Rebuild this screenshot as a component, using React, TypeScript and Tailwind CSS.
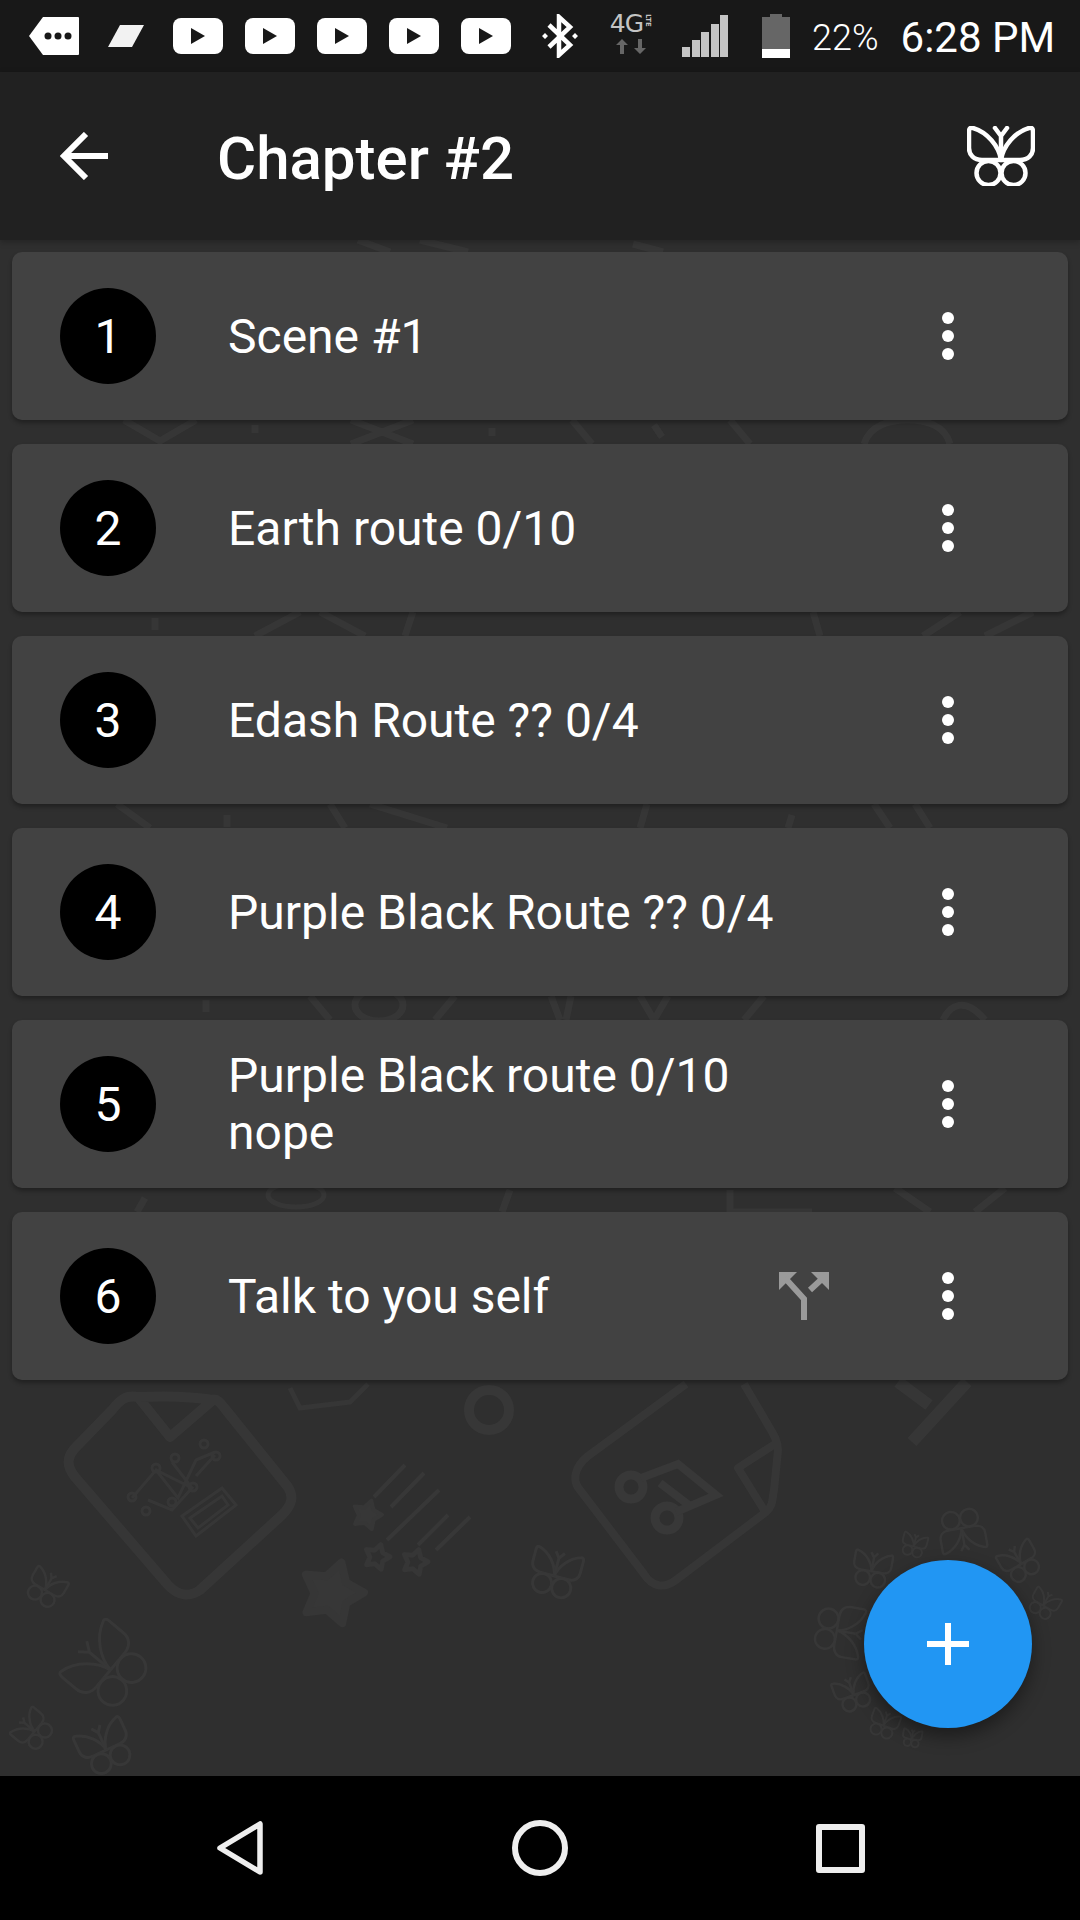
import React from "react";

const ROBOTO = "font-['Roboto',sans-serif]";

function Butterfly({ x, y, s, r = 0, w = 3 }: { x: number; y: number; s: number; r?: number; w?: number }) {
  const k = s / 68;
  return (
    <g transform={`translate(${x} ${y}) rotate(${r}) scale(${k}) translate(-34 -30)`} fill="none" stroke="#3b3b3b" strokeWidth={w / k}>
      <path d="M34 34C32 20 20 6 6 2 3 1 2 3 2 6V22C2 29 7 34 15 34H53C61 34 66 29 66 22V6C66 3 65 1 62 2 48 6 36 20 34 34Z" />
      <circle cx="21" cy="47" r="12.5" />
      <circle cx="47" cy="47" r="12.5" />
      <path d="M34 34V10M34 10L28 2M34 10L40 2" />
    </g>
  );
}

function Star({ x, y, r, fill, w = 5 }: { x: number; y: number; r: number; fill?: string; w?: number }) {
  const pts: string[] = [];
  for (let i = 0; i < 10; i++) {
    const a = (Math.PI / 5) * i - Math.PI / 2 + 0.3;
    const rr = i % 2 === 0 ? r : r * 0.55;
    pts.push(`${(x + rr * Math.cos(a)).toFixed(1)},${(y + rr * Math.sin(a)).toFixed(1)}`);
  }
  return <polygon points={pts.join(" ")} fill={fill ?? "none"} stroke="#393939" strokeWidth={w} strokeLinejoin="round" />;
}

function Wallpaper() {
  const gapMarks = [
    "M124 420L160 441L196 420", "M255 425v8", "M351 420L413 444M413 420L351 444", "M492 428v8", "M572 420L592 444", "M654 425l8 12", "M730 420L750 444", "M864 444C870 425 890 420 907 420C925 420 945 425 950 444",
    "M358 240L390 252M420 240L468 252M633 244l30 8",
    "M155 618v12", "M255 636L300 612M320 612L365 636", "M413 612L405 636", "M813 612L820 636", "M923 636L960 612M985 636L1033 612",
    "M117 804L150 828", "M227 815v12", "M330 804L345 828M370 804L447 828", "M647 804L640 828", "M792 815L788 828", "M874 804L890 828M915 804L930 828",
    "M206 1000v12", "M310 996L330 1020M455 996L435 1020", "M551 996L560 1020M571 996L566 1020", "M640 996L654 1020L668 996", "M744 1020L764 996", "M943 1020C950 1005 965 996 985 1020",
    "M145 1198l-8 14", "M730 1190v22H812", "M895 1188L930 1212M1005 1188L975 1212", "M510 1190l-8 22",
  ];
  return (
    <svg className="absolute inset-0 opacity-70" width="1080" height="1536" viewBox="0 240 1080 1536" fill="none">
      <g stroke="#3a3a3a">
        {gapMarks.map((d) => (
          <path key={d} d={d} strokeWidth="7" />
        ))}
      </g>
      <ellipse cx="296" cy="1195" rx="28" ry="12" stroke="#3a3a3a" strokeWidth="5" />
      <ellipse cx="379" cy="1005" rx="24" ry="16" stroke="#3a3a3a" strokeWidth="7" />
      <path d="M290 1388L300 1408L350 1402L368 1384" stroke="#393939" strokeWidth="5" />
      <circle cx="489" cy="1410" r="20" stroke="#3b3b3b" strokeWidth="10" />
      <path d="M138 1397L170 1437L213 1400M138 1397C125 1395 120 1400 112 1410L78 1445C66 1456 66 1466 75 1477L168 1585C178 1596 190 1597 200 1590L282 1515C292 1505 294 1497 288 1487L226 1410C220 1402 216 1398 213 1400C190 1396 160 1396 138 1397Z" stroke="#3a3a3a" strokeWidth="10" strokeLinejoin="round" />
      <g stroke="#3a3a3a" strokeWidth="3">
        <path d="M132 1498L156 1470L178 1498L196 1460L215 1452M156 1470L192 1488L172 1510L148 1500M172 1462L192 1488M215 1455L196 1476" />
        <circle cx="156" cy="1468" r="4" /><circle cx="132" cy="1497" r="4" /><circle cx="146" cy="1511" r="4" /><circle cx="172" cy="1502" r="4" /><circle cx="193" cy="1487" r="4" /><circle cx="175" cy="1458" r="4" /><circle cx="204" cy="1444" r="4" /><circle cx="216" cy="1456" r="4" />
        <path d="M182 1516L222 1488L236 1505L196 1536Z" />
        <path d="M190 1518L222 1496L228 1505L198 1528Z" />
      </g>
      <path d="M686 1384L588 1456C574 1467 572 1481 580 1490L644 1574C652 1587 664 1589 676 1580L766 1512C774 1505 772 1498 774 1490L778 1450C778 1440 772 1432 768 1425L744 1384M778 1442L738 1468L764 1510" stroke="#3a3a3a" strokeWidth="8" strokeLinejoin="round" />
      <circle cx="631" cy="1487" r="12" stroke="#3c3c3c" strokeWidth="9" />
      <circle cx="667" cy="1518" r="12" stroke="#3c3c3c" strokeWidth="9" />
      <path d="M641 1478L678 1464L716 1495L676 1512M660 1483L690 1506" stroke="#3c3c3c" strokeWidth="8" />
      <path d="M912 1442L967 1382M898 1382L929 1405" stroke="#3a3a3a" strokeWidth="12" />
      <Star x={332} y={1593} r={32} w={8} fill="#3b3b3b" />
      <Star x={377} y={1557} r={13} w={5} />
      <Star x={415} y={1562} r={13} w={5} />
      <Star x={367} y={1515} r={15} fill="#3b3b3b" w={4} />
      <path d="M374 1497L405 1465M391 1507L424 1473M387 1540L439 1490M418 1545L448 1515M436 1550L470 1517" stroke="#3b3b3b" strokeWidth="4" />
      <Butterfly x={46} y={1588} s={38} r={30} w={2.5} />
      <Butterfly x={107} y={1667} s={78} r={-50} w={3} />
      <Butterfly x={33} y={1730} s={38} r={-50} w={2.5} />
      <Butterfly x={105} y={1747} s={54} r={-25} w={3} />
      <Butterfly x={555} y={1573} s={52} r={15} w={3} />
      <Butterfly x={962} y={1531} s={48} r={170} w={2.5} />
      <Butterfly x={914} y={1545} s={26} r={15} w={2} />
      <Butterfly x={872} y={1569} s={40} r={10} w={2.5} />
      <Butterfly x={1020} y={1562} s={40} r={-30} w={2.5} />
      <Butterfly x={1044} y={1604} s={30} r={30} w={2} />
      <Butterfly x={840} y={1631} s={54} r={100} w={2.5} />
      <Butterfly x={853} y={1693} s={38} r={-20} w={2.5} />
      <Butterfly x={884} y={1724} s={30} r={20} w={2} />
      <Butterfly x={912} y={1738} s={20} r={10} w={2} />
    </svg>
  );
}

function Yt({ className }: { className: string }) {
  return (
    <div className={`flex h-[36px] w-[50px] items-center justify-center rounded-[8px] bg-white ${className}`}>
      <div className="h-0 w-0 border-y-[8px] border-l-[14px] border-y-transparent border-l-[#181818]" />
    </div>
  );
}

function StatusBar() {
  return (
    <div className={`flex h-[72px] shrink-0 items-center bg-[#181818] pl-[29px] text-white ${ROBOTO}`}>
      <svg width="50" height="38" viewBox="0 0 50 38">
        <path d="M14 0H49a1 1 0 0 1 1 1V37a1 1 0 0 1-1 1H14L0 19Z" fill="#fff" />
        <circle cx="19" cy="19" r="3.5" fill="#181818" /><circle cx="29" cy="19" r="3.5" fill="#181818" /><circle cx="39" cy="19" r="3.5" fill="#181818" />
      </svg>
      <svg width="36" height="22" viewBox="0 0 36 22" className="ml-[29px]">
        <path d="M12 0H36L24 22H0Z" fill="#f2f2f2" />
      </svg>
      <Yt className="ml-[29px]" />
      <Yt className="ml-[22px]" />
      <Yt className="ml-[22px]" />
      <Yt className="ml-[22px]" />
      <Yt className="ml-[22px]" />
      <svg width="38" height="44" viewBox="0 0 38 44" className="ml-[30px]" fill="none">
        <path d="M8 11L29 31L18 41V3L29 13L8 33" stroke="#fff" strokeWidth="4.5" />
        <path d="M4 19l3 3-3 3-3-3zM34 19l3 3-3 3-3-3z" fill="#fff" />
      </svg>
      <div className="ml-[26px] flex h-[44px] w-[52px] flex-col items-center">
        <div className="flex h-[22px] items-start font-['DejaVu_Sans',sans-serif] text-[#c4c4c4]">
          <span className="text-[25px] leading-[20px] tracking-[-1px]">4G</span>
          <span className="ml-[1px] text-[7px] font-bold leading-[8px] [writing-mode:vertical-rl]">LTE</span>
        </div>
        <svg width="30" height="16" viewBox="0 0 30 16" className="mt-[3px]" fill="#666666">
          <path d="M6 0L12 6H8V15H4V6H0ZM24 15L18 9H22V0H26V9H30Z" />
        </svg>
      </div>
      <svg width="46" height="42" viewBox="0 0 46 42" className="ml-[25px]" fill="#c4c4c4">
        <rect x="0" y="32" width="8" height="10" />
        <rect x="10" y="25" width="8" height="17" />
        <rect x="19" y="17" width="8" height="25" />
        <rect x="29" y="9" width="8" height="33" />
        <rect x="38" y="0" width="8" height="42" />
      </svg>
      <svg width="28" height="44" viewBox="0 0 28 44" className="ml-[34px]">
        <path d="M8 0H20V3H28V44H0V3H8Z" fill="#666" />
        <rect y="35" width="28" height="9" fill="#fff" />
      </svg>
      <span className="ml-[22px] pt-[4px] text-[36px] font-light leading-none">22%</span>
      <span className="ml-[22px] pt-[4px] whitespace-nowrap text-[42px] leading-none">6:28 PM</span>
    </div>
  );
}

function AppBar() {
  return (
    <div className={`relative z-10 flex h-[168px] shrink-0 items-center bg-[#212121] pl-[60px] shadow-[0_2px_6px_rgba(0,0,0,0.25)] ${ROBOTO}`}>
      <svg width="48" height="48" viewBox="0 0 48 48" fill="none" stroke="#fff" strokeWidth="6">
        <path d="M48 24H4M26 2L4 24L26 46" />
      </svg>
      <h1 className="ml-[109px] flex-1 pt-[6px] text-[60px] font-medium leading-none text-white">Chapter #2</h1>
      <svg width="68" height="60" viewBox="0 0 68 60" fill="none" stroke="#fff" strokeWidth="4.5" className="mr-[45px]" strokeLinecap="round" strokeLinejoin="round">
        <path d="M34 34C32 20 20 6 6 2 3 1 2 3 2 6V22C2 29 7 34 15 34H53C61 34 66 29 66 22V6C66 3 65 1 62 2 48 6 36 20 34 34Z" />
        <circle cx="21.5" cy="47" r="12" />
        <circle cx="46.5" cy="47" r="12" />
        <path d="M34 34V10M34 10L28 2M34 10L40 2" />
      </svg>
    </div>
  );
}

function Row({ n, lines, split }: { n: number; lines: string[]; split?: boolean }) {
  return (
    <div className="flex h-[168px] items-center rounded-[10px] bg-[#424242] pl-[48px] shadow-[0_3px_4px_rgba(0,0,0,0.3)]">
      <div className="flex h-[96px] w-[96px] shrink-0 items-center justify-center rounded-full bg-black pt-[2px] text-[48px] leading-none text-white">{n}</div>
      <div className="ml-[72px] w-[551px] shrink-0 text-[48px] leading-[57px] text-white">
        {lines.map((l) => (
          <div key={l}>{l}</div>
        ))}
      </div>
      <div className="flex h-[48px] w-[50px] shrink-0 items-center justify-center">
        {split && (
          <svg width="50" height="48" viewBox="0 0 50 48" fill="#9a9a9a">
            <path d="M0 0H18L0 18Z" />
            <path d="M50 0H32L50 18Z" />
            <path d="M6 6L25 27V48M44 6L31 18" fill="none" stroke="#9a9a9a" strokeWidth="6" />
          </svg>
        )}
      </div>
      <div className="ml-[113px] flex w-[12px] shrink-0 flex-col gap-[6px]">
        <div className="h-[12px] w-[12px] rounded-full bg-white" />
        <div className="h-[12px] w-[12px] rounded-full bg-white" />
        <div className="h-[12px] w-[12px] rounded-full bg-white" />
      </div>
    </div>
  );
}

function NavBar() {
  return (
    <div className="flex h-[144px] shrink-0 items-center bg-black pl-[216px]">
      <svg width="48" height="56" viewBox="0 0 48 56" fill="none" stroke="#eeeeee" strokeWidth="5.5" strokeLinejoin="round">
        <path d="M44 4V52L4 28Z" />
      </svg>
      <div className="ml-[248px] h-[56px] w-[56px] rounded-full border-[6px] border-[#eeeeee]" />
      <div className="ml-[248px] h-[49px] w-[49px] rounded-[3px] border-[6px] border-[#eeeeee]" />
    </div>
  );
}

export default function App() {
  return (
    <div className={`flex h-[1920px] w-[1080px] flex-col overflow-hidden bg-[#303030] ${ROBOTO}`}>
      <StatusBar />
      <AppBar />
      <main className="relative flex-1 overflow-hidden bg-[#2f2f2f]">
        <Wallpaper />
        <div className="relative flex flex-col gap-[24px] px-[12px] pt-[12px]">
          <Row n={1} lines={["Scene #1"]} />
          <Row n={2} lines={["Earth route 0/10"]} />
          <Row n={3} lines={["Edash Route ?? 0/4"]} />
          <Row n={4} lines={["Purple Black Route ?? 0/4"]} />
          <Row n={5} lines={["Purple Black route 0/10", "nope"]} />
          <Row n={6} lines={["Talk to you self"]} split />
        </div>
        <button className="absolute bottom-[48px] right-[48px] flex h-[168px] w-[168px] items-center justify-center rounded-full bg-[#2196f3] shadow-[0_8px_18px_rgba(0,0,0,0.4)]">
          <svg width="42" height="42" viewBox="0 0 42 42" fill="#fff">
            <path d="M18 0H24V18H42V24H24V42H18V24H0V18H18Z" />
          </svg>
        </button>
      </main>
      <NavBar />
    </div>
  );
}
